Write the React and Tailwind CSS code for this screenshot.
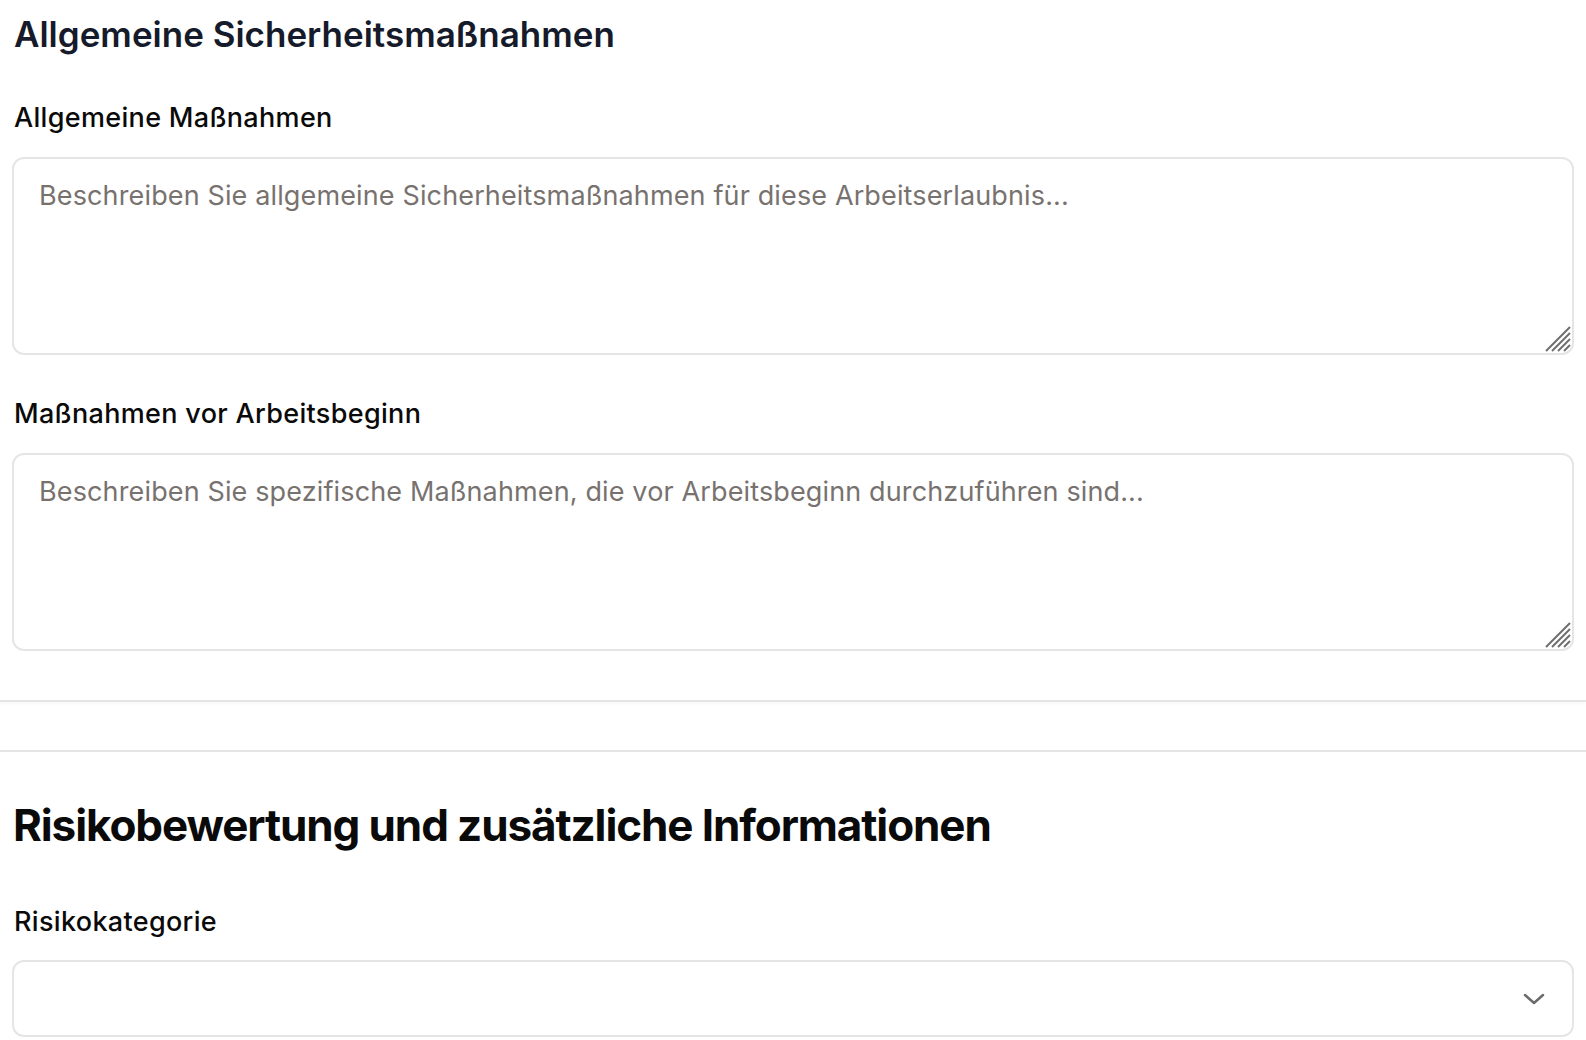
import React from 'react'

const ResizeGrip = () => (
  <svg
    className="absolute right-[3px] bottom-[3px] pointer-events-none"
    width="26"
    height="26"
    viewBox="0 0 26 26"
    fill="none"
    stroke="#6e6e6e"
    strokeWidth="2"
  >
    <line x1="1" y1="25" x2="25" y2="1" />
    <line x1="7" y1="25" x2="25" y2="7" />
    <line x1="13" y1="25" x2="25" y2="13" />
    <line x1="19" y1="25" x2="25" y2="19" />
  </svg>
)

const Field = ({ label, placeholder, className = '' }) => (
  <div className={className}>
    <label className="block pl-[2px] text-[27px] leading-[36px] font-medium tracking-[0.012em] text-[#0a0a0a]">
      {label}
    </label>
    <div className="relative mt-[21px]">
      <textarea
        placeholder={placeholder}
        className="block w-full h-[198px] resize-none rounded-[12px] border-2 border-[#e5e5e5] bg-white px-[25px] pt-[19px] text-[27px] leading-[36px] tracking-[0.005em] text-[#0a0a0a] placeholder:text-[#78726f] outline-none"
      />
      <ResizeGrip />
    </div>
  </div>
)

export default function App() {
  return (
    <div className="min-h-screen bg-white font-['Inter',sans-serif] overflow-hidden">
      {/* Allgemeine Sicherheitsmaßnahmen */}
      <section className="px-3 pt-[12px] pb-[49px] border-b-2 border-[#e5e5e5] shadow-[0_2px_4px_rgba(0,0,0,0.03)]">
        <h2 className="text-[35px] leading-[44px] font-semibold text-[#161b2b] pl-[2px]">
          Allgemeine Sicherheitsmaßnahmen
        </h2>
        <Field
          className="mt-[44px]"
          label="Allgemeine Maßnahmen"
          placeholder="Beschreiben Sie allgemeine Sicherheitsmaßnahmen für diese Arbeitserlaubnis..."
        />
        <Field
          className="mt-[41px]"
          label="Maßnahmen vor Arbeitsbeginn"
          placeholder="Beschreiben Sie spezifische Maßnahmen, die vor Arbeitsbeginn durchzuführen sind..."
        />
      </section>

      {/* Risikobewertung */}
      <section className="mt-[48px] px-3 pt-[48px] border-t-2 border-[#e5e5e5]">
        <h2 className="text-[44px] leading-[50px] font-bold tracking-[-0.025em] text-[#0a0a0a] pl-[1px]">
          Risikobewertung und zusätzliche Informationen
        </h2>
        <label className="block mt-[54px] pl-[2px] text-[27px] leading-[36px] font-medium tracking-[0.012em] text-[#0a0a0a]">
          Risikokategorie
        </label>
        <button className="mt-[20px] w-full h-[77px] flex items-center justify-end rounded-[12px] border-2 border-[#e5e5e5] bg-white pr-[27px]">
          <svg width="22" height="12" viewBox="0 0 22 12" fill="none" stroke="#6b6b6b" strokeWidth="2.5" strokeLinecap="round" strokeLinejoin="round">
            <polyline points="2,2 11,10 20,2" />
          </svg>
        </button>
      </section>
    </div>
  )
}
